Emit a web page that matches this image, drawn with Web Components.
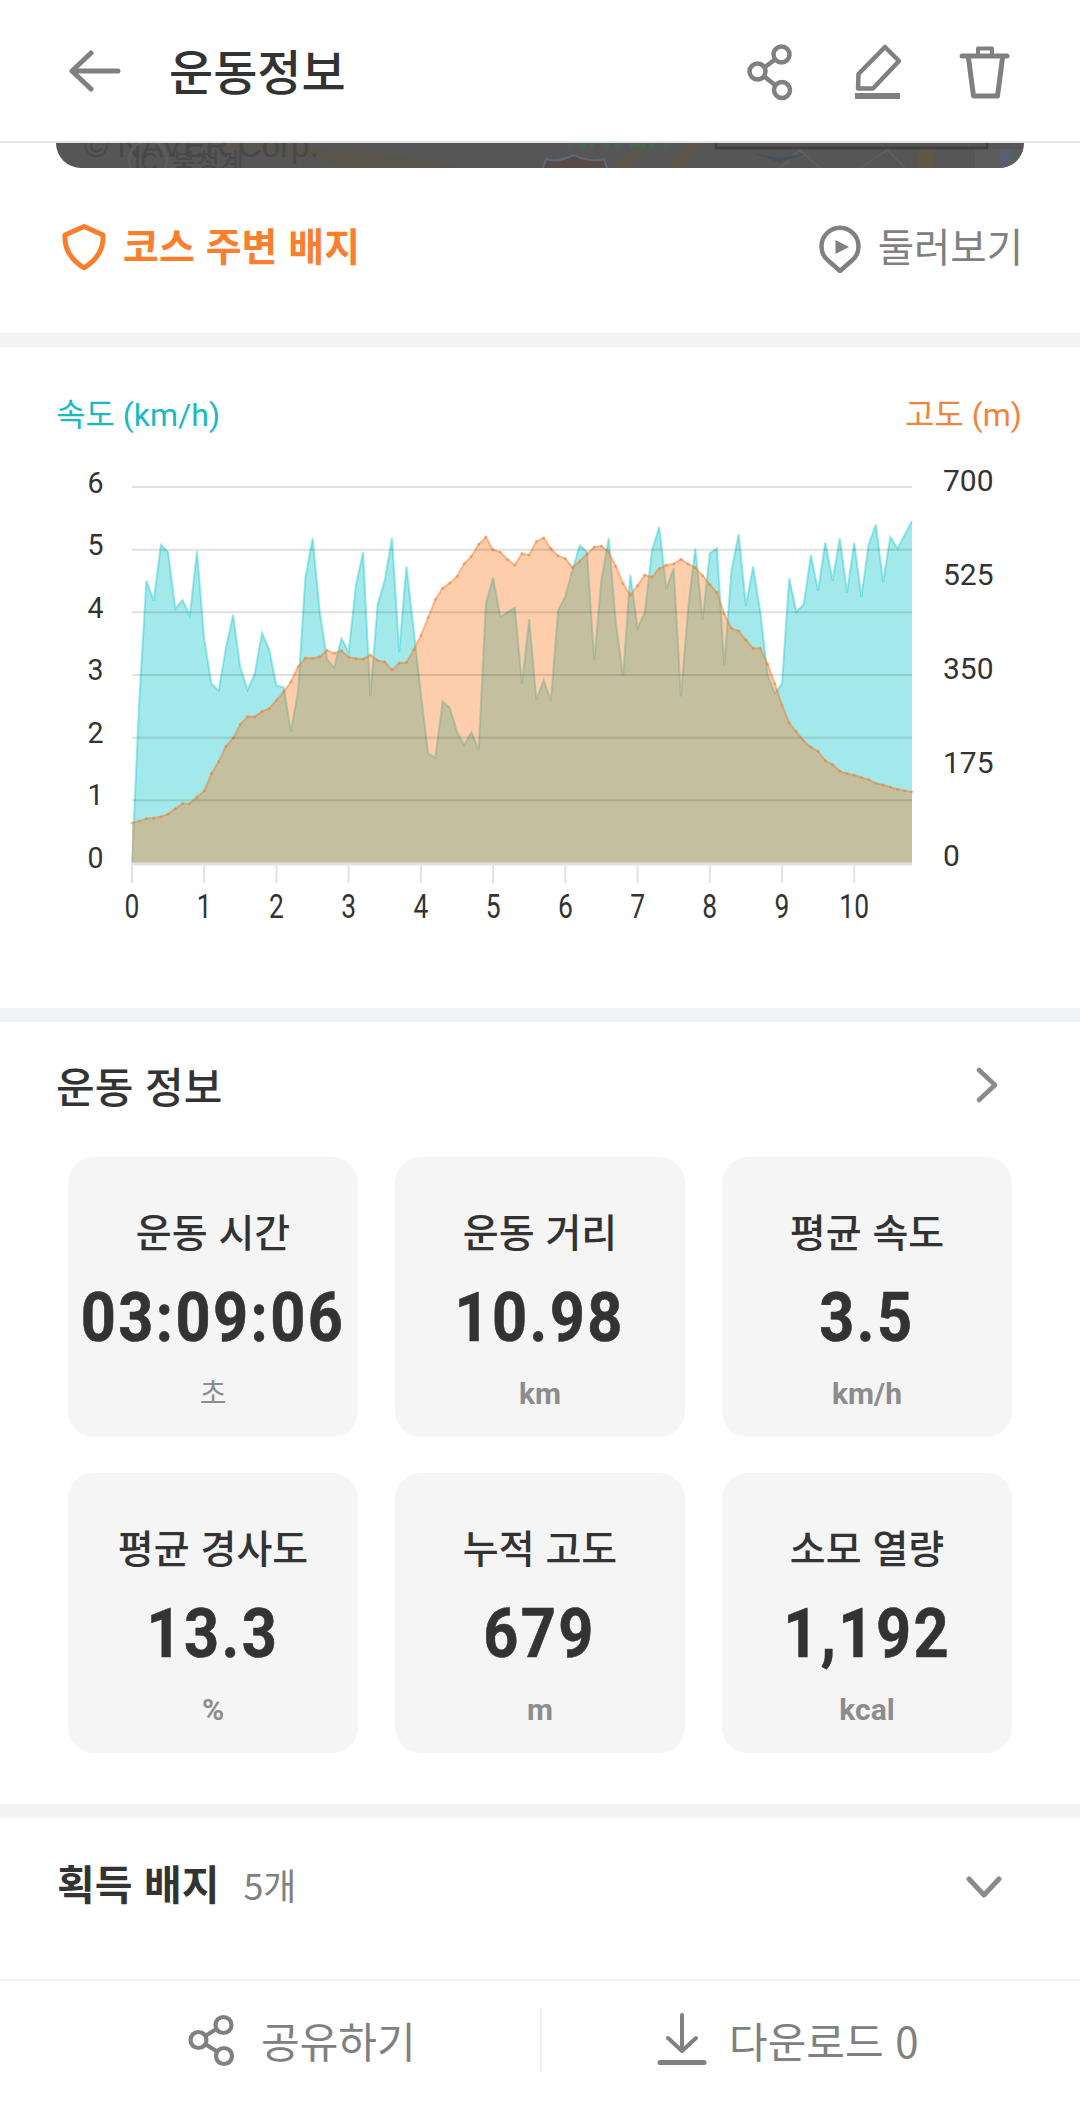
<!DOCTYPE html>
<html lang="ko">
<head>
<meta charset="utf-8">
<title>운동정보</title>
<style>
  html, body { margin:0; padding:0; background:#fff; }
  body { width:1080px; font-family:"Noto Sans CJK KR","Noto Sans",sans-serif; color:#333; }
</style>
</head>
<body>
<app-header>운동정보</app-header>
<map-strip></map-strip>
<course-row></course-row>
<gap-bar></gap-bar>
<chart-panel></chart-panel>
<gap-bar></gap-bar>
<info-section>
  <stat-card label="운동 시간" value="03:09:06" unit="초"></stat-card>
  <stat-card label="운동 거리" value="10.98" unit="km"></stat-card>
  <stat-card label="평균 속도" value="3.5" unit="km/h"></stat-card>
  <stat-card label="평균 경사도" value="13.3" unit="%"></stat-card>
  <stat-card label="누적 고도" value="679" unit="m"></stat-card>
  <stat-card label="소모 열량" value="1,192" unit="kcal"></stat-card>
</info-section>
<gap-bar></gap-bar>
<badge-row></badge-row>
<bottom-bar></bottom-bar>

<script>
// Header
class AppHeader extends HTMLElement {
  constructor() {
    super();
    this.attachShadow({mode:'open'});
    this.shadowRoot.innerHTML = `
      <style>
        :host { display:flex; align-items:center; height:141px; border-bottom:2px solid #e4e4e4; background:#fff; }
        .back { width:52px; height:44px; margin-left:69px; flex:none; }
        .title { margin-left:48px; font-size:48px; font-weight:500; color:#333; line-height:60px; margin-top:-3px; flex:1; }
        svg { display:block; }
        .icons { display:block; margin-right:20px; flex:none; }
      </style>
      <svg class="back" viewBox="0 0 52 44" fill="none" stroke="#808080" stroke-width="5" stroke-linecap="round" stroke-linejoin="round">
        <path d="M3 22H49M22 4L3 22L22 40"/>
      </svg>
      <span class="title"><slot></slot></span>
      <svg class="icons" width="320" height="70" viewBox="740 35 320 70" fill="none" stroke="#808080" stroke-width="4.5" stroke-linejoin="round" stroke-linecap="round">
        <circle cx="781.5" cy="53.5" r="8"/><circle cx="757.5" cy="70.5" r="8"/><circle cx="782" cy="89" r="8"/>
        <path d="M765 66L775 58.5M765 76L775 84"/>
        <path d="M858 87.5L858.5 73L885 46L899 60L873 87.5Z"/>
        <path d="M855 95H900" stroke-width="6" stroke-linecap="butt"/>
        <path d="M962 55H1007" stroke-width="5"/>
        <path d="M978 54V47.5H992V54" stroke-width="4"/>
        <path d="M968.5 57L973.5 95H997.5L1002.5 57" stroke-width="5"/>
      </svg>`;
  }
}
window.customElements.define('app-header', AppHeader);

// Dimmed map strip under the header
class MapStrip extends HTMLElement {
  constructor() {
    super();
    this.attachShadow({mode:'open'});
    this.shadowRoot.innerHTML = `
      <style>
        :host { display:block; height:25px; margin:0 56px; background:#565656; border-radius:0 0 26px 26px; overflow:hidden; }
        svg { display:block; }
        text { font-family:"Liberation Sans",sans-serif; }
      </style>
      <svg width="968" height="25" viewBox="56 143 968 25" fill="none">
        <path d="M150 143C220 150 300 148 340 168H460C400 152 300 150 250 143Z" fill="#5a554b"/>
        <path d="M610 168L640 143H650L625 168Z" fill="#5e5749"/>
        <path d="M690 143L665 168H680L705 143Z" fill="#5e5749"/>
        <path d="M780 168L800 150L820 168" stroke="#5e5e5e" stroke-width="2"/>
        <path d="M880 143L905 168M860 168L890 148" stroke="#5e5e5e" stroke-width="2"/>
        <path d="M918 147H933V168H918Z" fill="#5f5847"/>
        <path d="M975 149H1024V168H975Z" fill="#5c5c5c"/>
        <path d="M1000 150H1012V163H1000Z" fill="#556070"/>
        <text x="84" y="157" font-size="33" fill="#484848">© NAVER Corp.</text>
        <circle cx="148" cy="160" r="19" stroke="#5f5f5f" stroke-width="2"/>
        <text x="134" y="170" font-size="24" fill="#484848">IC</text>
        <text x="172" y="172" font-size="26" fill="#484848" style="font-family:'Noto Sans CJK KR',sans-serif">북청계</text>
        <text x="567" y="147" font-size="30" font-weight="700" fill="#3c6b50">NAVER</text>
        <rect x="716" y="130" width="271" height="18" stroke="#3e3e3e" stroke-width="2.5"/>
        <path d="M753 153L780 163L807 153L780 158Z" fill="#465060"/>
        <path d="M543 168L546 159C556 162 566 159 574 155C582 159 594 162 604 159L607 168" stroke="#5a6a80" stroke-width="2" fill="#5a4a46"/>
      </svg>`;
  }
}
window.customElements.define('map-strip', MapStrip);

// Course badge row
class CourseRow extends HTMLElement {
  constructor() {
    super();
    this.attachShadow({mode:'open'});
    this.shadowRoot.innerHTML = `
      <style>
        :host { display:flex; align-items:center; height:160px; padding:0 57px 5px 61px; background:#fff; }
        svg { display:block; flex:none; }
        .name { margin-left:12px; margin-top:-8px; font-size:39px; font-weight:700; color:#fb7d2e; flex:1; line-height:50px; }
        .look { margin-left:16px; margin-top:-7px; font-size:39.5px; color:#808080; line-height:50px; }
      </style>
      <svg width="50" height="50" viewBox="0 0 50 50" fill="none" stroke="#fb7d2e" stroke-width="5" stroke-linejoin="round">
        <path d="M23 3.5L42 12C43 27 34 38 23 45C12 38 3 27 4 12Z"/>
      </svg>
      <span class="name">코스 주변 배지</span>
      <svg width="44" height="50" viewBox="0 0 44 50" fill="none" stroke="#808080" stroke-width="4.5" stroke-linejoin="round">
        <path d="M22 48L9 36.500A18.500 18.500 0 1 1 35 36.500Z"/>
        <path d="M17.500 17L31 24L17.500 31Z" fill="#808080" stroke="none"/>
      </svg>
      <span class="look">둘러보기</span>`;
  }
}
window.customElements.define('course-row', CourseRow);

class GapBar extends HTMLElement {
  constructor() {
    super();
    this.attachShadow({mode:'open'});
    this.shadowRoot.innerHTML = `<style>:host { display:block; height:14px; background:#f2f3f4; }</style>`;
  }
}
window.customElements.define('gap-bar', GapBar);

// Speed / altitude chart. Values are read in a crop of the chart, hence the conversion in py()
const speedData = [1353,900,562,618,462,482,640,616,660,480,725,850,870,750,658,805,868,822,708,755,856,860,985,870,555,442,650,782,806,724,762,575,482,886,630,560,442,762,522,700,880,1045,1058,900,918,985,1022,986,1036,625,553,663,650,637,850,670,896,840,898,645,605,530,463,482,785,560,443,680,830,545,695,650,478,411,585,527,886,640,472,672,485,472,800,535,432,632,522,650,825,878,850,555,650,628,490,590,455,562,443,595,456,607,460,405,566,440,472,433,395];
const altData = [1240,1235,1228,1226,1223,1215,1200,1186,1186,1168,1150,1102,1068,1026,1003,964,942,943,928,920,897,873,845,803,778,779,775,757,765,758,776,780,781,770,785,790,812,792,791,755,715,665,615,583,568,550,514,494,460,440,476,482,503,518,486,490,452,442,472,492,500,525,507,487,468,465,482,522,570,602,575,546,552,528,518,515,502,515,525,548,572,595,655,695,703,728,751,751,795,850,910,960,985,1010,1028,1040,1066,1077,1095,1102,1106,1113,1119,1129,1134,1140,1146,1150,1153];
const px = i => 132 + i * 7.2222;
const py = v => 380 + v / 2.8;
const linePts = arr => arr.map((v, i) => px(i).toFixed(1) + ' ' + py(v).toFixed(1)).join(' L');

class ChartPanel extends HTMLElement {
  constructor() {
    super();
    this.attachShadow({mode:'open'});
    let grid = '';
    for (let k = 0; k <= 5; k++) {
      const y = 487 + k * 62.67;
      grid += `<line x1="132" x2="912" y1="${y}" y2="${y}"/>`;
    }
    let ticks = '', xLabels = '';
    for (let k = 0; k <= 10; k++) {
      const x = 132 + k * 72.22;
      ticks += `<line x1="${x}" x2="${x}" y1="864" y2="883"/>`;
      xLabels += `<text class="xl" transform="translate(${x} 917.500) scale(.8 1)" text-anchor="middle">${k}</text>`;
    }
    let yLeft = '';
    for (let k = 0; k <= 6; k++) {
      yLeft += `<text transform="translate(103.500 ${492.800 + (6 - k) * 62.5}) scale(.95 1)" text-anchor="end">${k}</text>`;
    }
    const yRight = [['700',491],['525',585],['350',678.500],['175',773],['0',866]]
      .map(r => `<text x="943" y="${r[1]}">${r[0]}</text>`).join('');
    const dots = altData.map((v, i) => `<circle cx="${px(i).toFixed(1)}" cy="${py(v).toFixed(1)}" r="1.500"/>`).join('');
    this.shadowRoot.innerHTML = `
      <style>
        :host { display:block; height:661px; background:#fff; }
        .titles { display:flex; justify-content:space-between; padding:43px 58px 0 56px; font-size:32px; line-height:50px; height:50px; font-family:Roboto,"Noto Sans CJK KR",sans-serif; }
        .speed { color:#1ab9c4; }
        .alt { color:#f0843c; }
        svg { display:block; }
        text { font-family:Roboto,sans-serif; font-size:30px; fill:#333; }
        text.xl { font-size:33px; }
      </style>
      <div class="titles"><span class="speed">속도 (km/h)</span><span class="alt">고도 (m)</span></div>
      <svg width="1080" height="568" viewBox="0 440 1080 568">
        <path d="M${linePts(speedData)} L912 863 L132 863Z" fill="rgba(25,200,205,.4)"/>
        <path d="M${linePts(speedData)}" fill="none" stroke="rgba(25,200,205,.42)" stroke-width="2"/>
        <path d="M${linePts(altData)} L912 863 L132 863Z" fill="rgba(250,120,31,.37)"/>
        <path d="M${linePts(altData)}" fill="none" stroke="rgba(240,120,40,.45)" stroke-width="2"/>
        <g fill="rgba(240,120,40,.45)">${dots}</g>
        <g stroke="rgba(0,0,0,.12)" stroke-width="2">${grid}</g>
        <g stroke="#e2e2e2" stroke-width="2">
          <line x1="131" x2="912" y1="864" y2="864" stroke-width="3"/>
          ${ticks}
        </g>
        ${yLeft}${xLabels}${yRight}
      </svg>`;
  }
}
window.customElements.define('chart-panel', ChartPanel);

// Stat card + section
class StatCard extends HTMLElement {
  constructor() {
    super();
    this.attachShadow({mode:'open'});
    const unit = this.getAttribute('unit');
    this.shadowRoot.innerHTML = `
      <style>
        :host { display:flex; flex-direction:column; align-items:center; height:280px; background:#f5f5f5; border-radius:26px; }
        .label { margin-top:50px; font-size:39px; line-height:46px; font-weight:500; color:#333; }
        .value { margin-top:29px; font-family:Roboto,sans-serif; font-size:68px; font-weight:700; line-height:72px; color:#333; letter-spacing:2.7px; transform:scaleX(.9); white-space:nowrap; -webkit-text-stroke:.6px #333; }
        .unit { margin-top:20px; font-family:Roboto,"Noto Sans CJK KR",sans-serif; font-size:30px; font-weight:700; line-height:40px; color:#8c8c8c; }
        .unit.kr { font-weight:400; font-size:29px; }
      </style>
      <div class="label">${this.getAttribute('label')}</div>
      <div class="value">${this.getAttribute('value')}</div>
      <div class="unit ${unit == '초' ? 'kr' : ''}">${unit}</div>`;
  }
}
window.customElements.define('stat-card', StatCard);

class InfoSection extends HTMLElement {
  constructor() {
    super();
    this.attachShadow({mode:'open'});
    this.shadowRoot.innerHTML = `
      <style>
        :host { display:block; height:782px; background:#fff; }
        .head { display:flex; align-items:center; justify-content:space-between; height:135px; padding:0 82px 9px 56px; box-sizing:border-box; }
        .head span { font-size:42px; font-weight:500; color:#333; line-height:54px; }
        .grid { display:grid; grid-template-columns:repeat(3,290px); column-gap:37px; row-gap:36px; padding:0 68px; }
        svg { display:block; }
      </style>
      <div class="head">
        <span>운동 정보</span>
        <svg width="22" height="36" viewBox="0 0 22 36" fill="none" stroke="#8a8a8a" stroke-width="4.500" stroke-linecap="round" stroke-linejoin="round"><path d="M3 3L19 18L3 33"/></svg>
      </div>
      <div class="grid"><slot></slot></div>`;
  }
}
window.customElements.define('info-section', InfoSection);

// Earned badges row
class BadgeRow extends HTMLElement {
  constructor() {
    super();
    this.attachShadow({mode:'open'});
    this.shadowRoot.innerHTML = `
      <style>
        :host { display:flex; align-items:center; height:161px; padding:0 78px 24px 57px; box-sizing:border-box; background:#fff; }
        .name { font-size:41px; font-weight:700; color:#333; line-height:54px; margin-top:-9px; }
        .count { margin-left:24px; font-size:36px; color:#808080; line-height:54px; flex:1; margin-top:-5px; }
        svg { display:block; }
      </style>
      <span class="name">획득 배지</span>
      <span class="count">5개</span>
      <svg width="36" height="22" viewBox="0 0 36 22" fill="none" stroke="#8a8a8a" stroke-width="5" stroke-linecap="round" stroke-linejoin="round"><path d="M3 3L18 19L33 3"/></svg>`;
  }
}
window.customElements.define('badge-row', BadgeRow);

// Bottom action bar
class BottomBar extends HTMLElement {
  constructor() {
    super();
    this.attachShadow({mode:'open'});
    this.shadowRoot.innerHTML = `
      <style>
        :host { display:flex; align-items:center; height:127px; box-sizing:border-box; border-top:2px solid #f2f2f2; background:#fff; padding-bottom:8px; }
        .act { display:flex; align-items:center; color:#808080; font-size:42px; line-height:54px; box-sizing:border-box; }
        .sh { flex:none; width:540px; padding-left:187px; gap:24px; }
        .dl { flex:1; padding-left:115px; gap:22px; }
        .sep { width:2px; height:64px; background:#f0f0f0; flex:none; }
        svg { display:block; flex:none; }
      </style>
      <div class="act sh">
        <svg width="50" height="54" viewBox="187 2016 50 54" fill="none" stroke="#808080" stroke-width="4.200">
          <circle cx="223.500" cy="2028" r="8"/><circle cx="198.500" cy="2043" r="8"/><circle cx="224" cy="2059" r="8"/>
          <path d="M206 2038.500L216.500 2032M206 2047.500L217 2054.500"/>
        </svg>
        <span>공유하기</span>
      </div>
      <div class="sep"></div>
      <div class="act dl">
        <svg width="50" height="54" viewBox="657 2017 50 54" fill="none" stroke="#808080" stroke-width="4" stroke-linecap="round" stroke-linejoin="round">
          <path d="M682 2019V2055M668 2042L682 2055L696 2042"/>
          <path d="M660 2066.500H704" stroke-width="5"/>
        </svg>
        <span>다운로드 0</span>
      </div>`;
  }
}
window.customElements.define('bottom-bar', BottomBar);
</script>
</body>
</html>
